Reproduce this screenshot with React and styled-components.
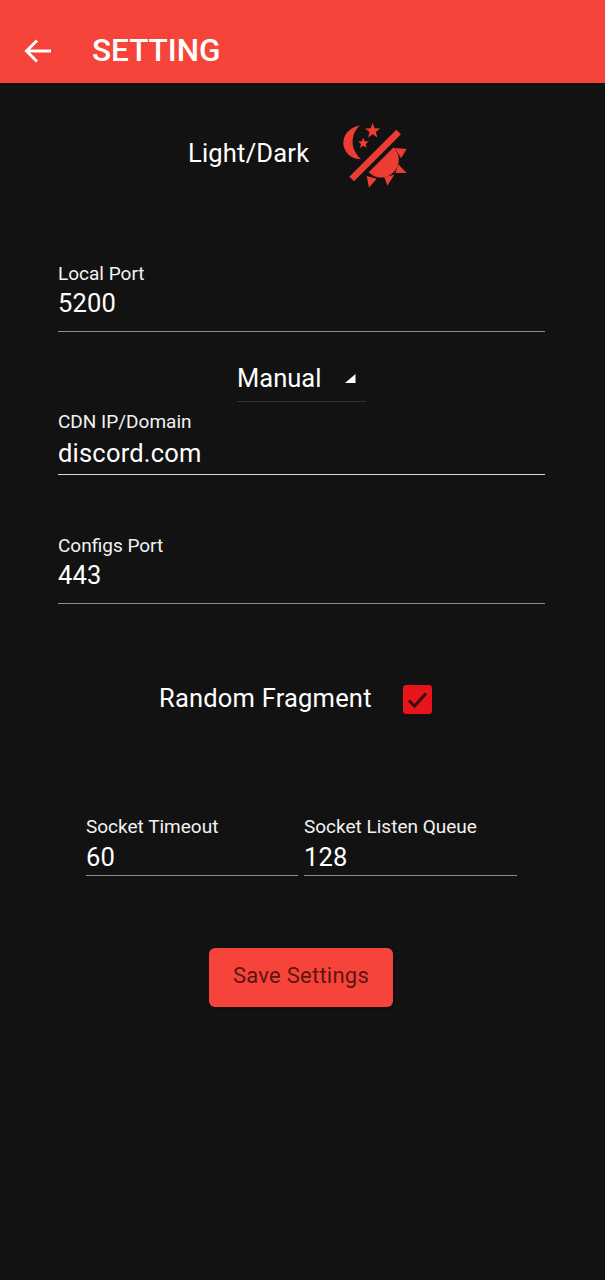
import React from 'react';
import styled, { createGlobalStyle } from 'styled-components';

const GlobalStyle = createGlobalStyle`
  html, body {
    margin: 0;
    padding: 0;
    background: #121212;
  }
  body {
    font-family: Roboto, "Noto Sans", sans-serif;
    color: #fff;
  }
`;

const Page = styled.div`
  width: 605px;
  height: 1280px;
  overflow: hidden;
  background: #121212;
`;

const Header = styled.header`
  height: 83px;
  box-sizing: border-box;
  display: flex;
  align-items: center;
  padding: 18px 0 0 24px;
  background: #f7443a;
`;

const BackIcon = styled.svg`
  width: 29px;
  height: 26px;
  display: block;
`;

const Title = styled.h1`
  margin: 0 0 0 39px;
  font-size: 31.500px;
  font-weight: 500;
  line-height: 34px;
  color: #fff;
`;

const Main = styled.main`
  display: flex;
  flex-direction: column;
`;

const ThemeRow = styled.div`
  height: 60px;
  margin: 40px 0 0 188px;
  display: flex;
  align-items: center;
  gap: 33px;
`;

const RowLabel = styled.span`
  font-size: 25.5px;
  line-height: 30px;
  letter-spacing: 0.2px;
  color: #fff;
`;

const ThemeIcon = styled.svg`
  width: 66px;
  height: 66px;
  margin-top: 6px;
  flex: none;
  display: block;
`;

const Field = styled.div`
  box-sizing: border-box;
  width: ${(p) => p.$width || 487}px;
  margin: ${(p) => p.$margin || '0 0 0 58px'};
  height: ${(p) => p.$height || 70}px;
  display: flex;
  flex-direction: column;
  border-bottom: 1px solid ${(p) => p.$line || '#8d8d8d'};
`;

const FieldLabel = styled.label`
  font-size: 19px;
  line-height: 22px;
  color: #f2f2f2;
`;

const FieldValue = styled.div`
  margin-top: ${(p) => p.$gap ?? 4}px;
  font-size: 25.5px;
  line-height: 30px;
  letter-spacing: 0.2px;
  color: #fff;
`;

const Dropdown = styled.div`
  box-sizing: border-box;
  width: 129px;
  height: 43px;
  margin: 27px 0 0 237px;
  display: flex;
  align-items: flex-start;
  justify-content: space-between;
  padding: 4px 10px 0 0;
  border-bottom: 1px solid #333;
`;

const DropdownText = styled.span`
  font-size: 25.5px;
  line-height: 30px;
  color: #fff;
`;

const Caret = styled.svg`
  width: 12px;
  height: 11px;
  margin-top: 10px;
  display: block;
`;

const FragmentRow = styled.div`
  height: 32px;
  margin: 78px 0 0 159px;
  display: flex;
  align-items: center;
  gap: 31px;
`;

const CheckBox = styled.div`
  width: 29px;
  height: 29px;
  border-radius: 3px;
  background: #e8141c;
  display: flex;
  align-items: center;
  justify-content: center;
  margin-top: 2px;
`;

const CheckIcon = styled.svg`
  width: 23px;
  height: 23px;
  display: block;
`;

const SocketRow = styled.div`
  margin: 102px 0 0 86px;
  display: flex;
  gap: 6px;
`;

const SaveButton = styled.button`
  width: 184px;
  height: 59px;
  margin: 72px 0 0 209px;
  padding: 0 0 4px;
  border: none;
  border-radius: 6px;
  background: #f7443a;
  color: #5d1512;
  font-family: Roboto, sans-serif;
  font-size: 22px;
  letter-spacing: 0.25px;
  box-shadow: 0 1px 3px rgba(0, 0, 0, 0.5);
`;

const red = '#ec3c33';

const starPoints = (cx, cy, R, r) => {
  const pts = [];
  for (let i = 0; i < 10; i++) {
    const a = (Math.PI / 5) * i - Math.PI / 2;
    const d = i % 2 ? r : R;
    pts.push(`${(cx + d * Math.cos(a)).toFixed(1)},${(cy + d * Math.sin(a)).toFixed(1)}`);
  }
  return pts.join(' ');
};

const SunMoonIcon = () => (
  <ThemeIcon viewBox='36 38 198 198'>
    <path
      fill={red}
      d='M90 45C55 52 38 78 40 102C43 128 65 148 92 146C76 130 66 112 68 90C70 70 78 56 90 45Z'
    />
    <polygon fill={red} points={starPoints(128, 62, 24, 10)} />
    <polygon fill={red} points={starPoints(100, 99, 17, 7.5)} />
    <path fill='none' stroke={red} strokeWidth='20' d='M206 65L65 206' />
    <path fill={red} d='M191 111A52 52 0 0 1 116 186Z' />
    <path
      fill={red}
      d='M195 113L230 116L213 144ZM205 162L230 188L196 188ZM163 200L193 193L172 226ZM110 197L140 205L117 232Z'
    />
  </ThemeIcon>
);

const App = () => {
  return (
    <Page>
      <GlobalStyle />
      <Header>
        <BackIcon viewBox='0 0 29 26' fill='none' stroke='#fff' strokeWidth='3'>
          <path d='M27 13H3' />
          <path d='M13 2.500 2.500 13 13 23.500' />
        </BackIcon>
        <Title>SETTING</Title>
      </Header>
      <Main>
        <ThemeRow>
          <RowLabel>Light/Dark</RowLabel>
          <SunMoonIcon />
        </ThemeRow>

        <Field $margin='80px 0 0 58px' $height={69}>
          <FieldLabel>Local Port</FieldLabel>
          <FieldValue $gap={3}>5200</FieldValue>
        </Field>

        <Dropdown>
          <DropdownText>Manual</DropdownText>
          <Caret viewBox='0 0 12 11'>
            <path fill='#fff' d='M11.500 1V10H1Z' />
          </Caret>
        </Dropdown>

        <Field $margin='9px 0 0 58px' $height={64} $line='#d8d8d8'>
          <FieldLabel>CDN IP/Domain</FieldLabel>
          <FieldValue $gap={5}>discord.com</FieldValue>
        </Field>

        <Field $margin='60px 0 0 58px' $height={69}>
          <FieldLabel>Configs Port</FieldLabel>
          <FieldValue $gap={3}>443</FieldValue>
        </Field>

        <FragmentRow>
          <RowLabel>Random Fragment</RowLabel>
          <CheckBox>
            <CheckIcon viewBox='0 0 23 23' fill='none' stroke='#3a0c0c' strokeWidth='3'>
              <path d='M3 12.500l5.500 5.500L20 5.500' />
            </CheckIcon>
          </CheckBox>
        </FragmentRow>

        <SocketRow>
          <Field $width={212} $margin='0' $height={60}>
            <FieldLabel>Socket Timeout</FieldLabel>
            <FieldValue>60</FieldValue>
          </Field>
          <Field $width={213} $margin='0' $height={60}>
            <FieldLabel>Socket Listen Queue</FieldLabel>
            <FieldValue>128</FieldValue>
          </Field>
        </SocketRow>

        <SaveButton>Save Settings</SaveButton>
      </Main>
    </Page>
  );
};

export default App;
